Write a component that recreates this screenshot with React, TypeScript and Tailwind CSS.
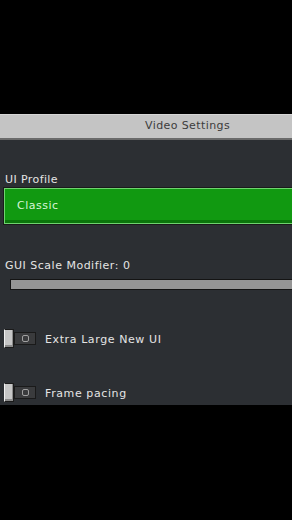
import React from 'react';

const font = { fontFamily: '"DejaVu Sans", "Liberation Sans", sans-serif' };

const Toggle = ({ label, className }: { label: string; className?: string }) => (
  <div className={`flex items-center h-[19px] ${className ?? ''}`}>
    <div className="ml-[4px] w-[10px] h-[19px] bg-[#c6c6c6] border border-[#1b1b1b] border-l-[#f0f0f0] shadow-[inset_-1px_-2px_0_#8b8b8b] z-10" />
    <div className="w-[22px] h-[13px] bg-[#3a3b3d] border border-[#1a1a1a] flex items-center justify-center">
      <div className="w-[7px] h-[7px] rounded-[2px] border border-[#a0a0a0]" />
    </div>
    <span className="ml-[9px] mt-[2px] text-[11px] leading-[14px] text-[#e4e4e4] tracking-[0.6px]">{label}</span>
  </div>
);

const App: React.FC = () => {
  return (
    <div className="w-[292px] h-[520px] bg-black flex flex-col overflow-hidden" style={font}>
      <div className="h-[114px] shrink-0" />

      {/* Header */}
      <div className="h-[24px] shrink-0 bg-[#c4c4c4] border-t border-[#d6d6d6] flex items-center pl-[145px]">
        <span className="text-[11px] text-[#3c3c3c] tracking-[0.4px]">Video Settings</span>
      </div>
      <div className="h-[2px] shrink-0 bg-[#6a6a6a]" />

      {/* Body */}
      <div className="h-[265px] shrink-0 bg-[#2c2f33] pt-[33px] flex flex-col">
        <div className="pl-[5px] text-[11px] leading-[14px] text-[#e4e4e4] tracking-[0.4px]">UI Profile</div>

        <div className="ml-[3px] h-[38px] border border-[#1a1a1a] border-r-0">
          <div className="h-full border border-[#6fd36f] border-r-0 bg-[#119911] shadow-[inset_0_-3px_0_#0b760b] flex items-center pl-[12px]">
            <span className="text-[11px] text-[#d6f5d6] tracking-[0.5px]">Classic</span>
          </div>
        </div>

        <div className="mt-[34px] pl-[5px] text-[11px] leading-[14px] text-[#e4e4e4] tracking-[0.5px]">GUI Scale Modifier: 0</div>

        <div className="mt-[6px] ml-[10px] h-[11px] bg-[#959595] border border-[#141414] border-r-0" />

        <Toggle label="Extra Large New UI" className="mt-[39px]" />
        <Toggle label="Frame pacing" className="mt-[35px]" />
      </div>

      <div className="flex-1 bg-black" />
    </div>
  );
};

export default App;
